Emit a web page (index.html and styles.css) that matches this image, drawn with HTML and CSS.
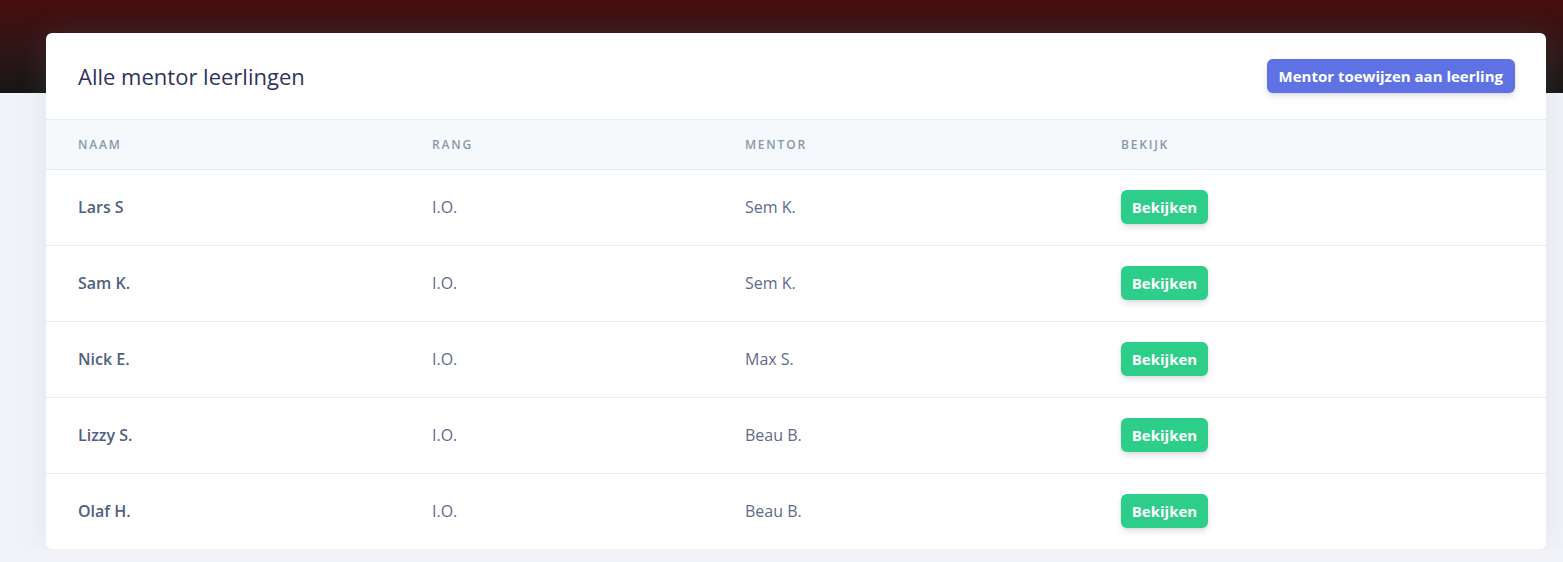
FILE: index.html
```html
<!DOCTYPE html>
<html lang="nl">
<head>
<meta charset="utf-8">
<title>Alle mentor leerlingen</title>
<link rel="stylesheet" href="styles.css">
</head>
<body>
<div class="hero"></div>
<main class="content">
  <section class="card">
    <header class="card-header">
      <h3 class="card-title">Alle mentor leerlingen</h3>
      <button class="btn btn-primary">Mentor toewijzen aan leerling</button>
    </header>
    <table class="table">
      <colgroup>
        <col class="c1"><col class="c2"><col class="c3"><col class="c4">
      </colgroup>
      <thead>
        <tr><th>Naam</th><th>Rang</th><th>Mentor</th><th>Bekijk</th></tr>
      </thead>
      <tbody>
        <tr><td class="name">Lars S</td><td>I.O.</td><td>Sem K.</td><td><button class="btn btn-success">Bekijken</button></td></tr>
        <tr><td class="name">Sam K.</td><td>I.O.</td><td>Sem K.</td><td><button class="btn btn-success">Bekijken</button></td></tr>
        <tr><td class="name">Nick E.</td><td>I.O.</td><td>Max S.</td><td><button class="btn btn-success">Bekijken</button></td></tr>
        <tr><td class="name">Lizzy S.</td><td>I.O.</td><td>Beau B.</td><td><button class="btn btn-success">Bekijken</button></td></tr>
        <tr><td class="name">Olaf H.</td><td>I.O.</td><td>Beau B.</td><td><button class="btn btn-success">Bekijken</button></td></tr>
      </tbody>
    </table>
  </section>
</main>
</body>
</html>
```
FILE: styles.css
```css
* { box-sizing: border-box; }
html, body {
  margin: 0;
  padding: 0;
  background: #f2f3f8;
  font-family: "Open Sans", "Liberation Sans", sans-serif;
  color: #525f7f;
  overflow: hidden;
}
.hero {
  height: 93px;
  background: linear-gradient(180deg, #470d0e 0%, #2f1516 55%, #161616 100%);
}
.content {
  margin-top: -60px;
  padding: 0 17px 0 46px;
}
.card {
  width: 1500px;
  background: #fff;
  border-radius: 6px;
  overflow: hidden;
  box-shadow: 0 0 2rem 0 rgba(136, 152, 170, 0.15);
}
.card-header {
  height: 87px;
  display: flex;
  align-items: center;
  justify-content: space-between;
  padding: 0 31px 0 32px;
  border-bottom: 1px solid #e9ecef;
}
.card-title {
  margin: 0;
  font-size: 22px;
  font-weight: 500;
  color: #32325d;
  letter-spacing: 0;
}
.btn {
  border: 0;
  font-family: "Open Sans", "Liberation Sans", sans-serif;
  font-size: 15px;
  font-weight: 700;
  color: #fff;
  height: 34px;
  padding: 0 12px;
  border-radius: 6px;
  box-shadow: 0 4px 6px rgba(50, 50, 93, 0.11), 0 1px 3px rgba(0, 0, 0, 0.08);
  cursor: pointer;
}
.btn-primary {
  background: #5e72e4;
  margin-top: 0;
}
.btn-success {
  background: #2dce89;
  width: 87px;
  padding: 0;
}
.table {
  width: 100%;
  border-collapse: collapse;
  table-layout: fixed;
}
.c1 { width: 354px; }
.c2 { width: 313px; }
.c3 { width: 376px; }
.c4 { width: 457px; }
.table th {
  height: 49px;
  background: #f6f9fc;
  border-bottom: 1px solid #e9ecef;
  text-align: left;
  padding: 0 0 0 32px;
  font-size: 12px;
  font-weight: 600;
  letter-spacing: 1.8px;
  text-transform: uppercase;
  color: #8898aa;
}
.table td {
  height: 76px;
  padding: 0 0 0 32px;
  border-top: 1px solid #e9ecef;
  font-size: 16px;
  font-weight: 400;
  color: #5f6b8c;
  vertical-align: middle;
}
.table tbody tr:first-child td {
  border-top: 0;
  height: 76px;
}
.table td.name {
  font-weight: 600;
  color: #525f7f;
}
```
